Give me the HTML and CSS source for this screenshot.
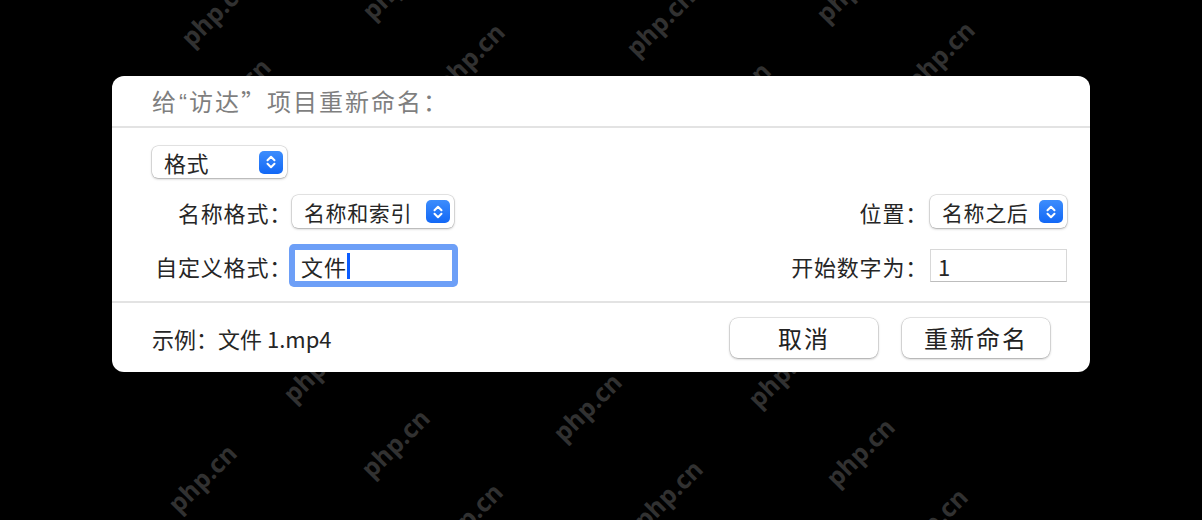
FILE: index.html
```html
<!DOCTYPE html>
<html lang="zh-CN">
<head>
<meta charset="utf-8">
<link rel="stylesheet" href="styles.css">
</head>
<body>
<div class="watermarks">
  <span class="wm" style="left:215px;top:12px">php.cn</span>
  <span class="wm" style="left:396px;top:-15px">php.cn</span>
  <span class="wm" style="left:660px;top:22px">php.cn</span>
  <span class="wm" style="left:850px;top:-12px">php.cn</span>
  <span class="wm" style="left:470px;top:57px">php.cn</span>
  <span class="wm" style="left:940px;top:55px">php.cn</span>
  <span class="wm" style="left:236px;top:92px">php.cn</span>
  <span class="wm" style="left:736px;top:96px">php.cn</span>
  <span class="wm" style="left:317px;top:368px">php.cn</span>
  <span class="wm" style="left:587px;top:407px">php.cn</span>
  <span class="wm" style="left:782px;top:373px">php.cn</span>
  <span class="wm" style="left:395px;top:443px">php.cn</span>
  <span class="wm" style="left:860px;top:452px">php.cn</span>
  <span class="wm" style="left:202px;top:478px">php.cn</span>
  <span class="wm" style="left:668px;top:494px">php.cn</span>
  <span class="wm" style="left:468px;top:517px">php.cn</span>
  <span class="wm" style="left:933px;top:522px">php.cn</span>
</div>

<div class="dialog">
  <div class="title">给<span class="q">“</span>访达”项目重新命名：</div>
  <div class="form">
    <div class="popup popup-format">
      <span class="popup-text">格式</span>
      <span class="stepper"><svg viewBox="0 0 24 24" width="24" height="24"><path d="M8.5 10.2 L12 6.7 L15.5 10.2 M8.5 13.8 L12 17.3 L15.5 13.8" fill="none" stroke="#fff" stroke-width="2" stroke-linecap="round" stroke-linejoin="round"/></svg></span>
    </div>
    <div class="grid">
      <div class="label">名称格式：</div>
      <div class="popup popup-wide">
        <span class="popup-text">名称和索引</span>
        <span class="stepper"><svg viewBox="0 0 24 24" width="24" height="24"><path d="M8.5 10.2 L12 6.7 L15.5 10.2 M8.5 13.8 L12 17.3 L15.5 13.8" fill="none" stroke="#fff" stroke-width="2" stroke-linecap="round" stroke-linejoin="round"/></svg></span>
      </div>
      <div class="spacer"></div>
      <div class="label label-right">位置：</div>
      <div class="popup popup-right">
        <span class="popup-text">名称之后</span>
        <span class="stepper"><svg viewBox="0 0 24 24" width="24" height="24"><path d="M8.5 10.2 L12 6.7 L15.5 10.2 M8.5 13.8 L12 17.3 L15.5 13.8" fill="none" stroke="#fff" stroke-width="2" stroke-linecap="round" stroke-linejoin="round"/></svg></span>
      </div>

      <div class="label">自定义格式：</div>
      <div class="textfield focused"><span>文件</span><span class="caret"></span></div>
      <div class="spacer"></div>
      <div class="label label-right">开始数字为：</div>
      <div class="textfield plain">1</div>
    </div>
  </div>
  <div class="footer">
    <div class="example">示例：文件 1.mp4</div>
    <div class="buttons">
      <button class="btn">取消</button>
      <button class="btn">重新命名</button>
    </div>
  </div>
</div>
</body>
</html>
```

FILE: styles.css
```css
html, body {
  margin: 0;
  padding: 0;
  overflow: hidden;
}
html {
  width: 1202px;
  height: 520px;
  background: #000;
}
body {
  width: 1202px;
  height: 520px;
  background: #000;
  position: relative;
  font-family: "Noto Sans CJK SC", "Noto Sans", sans-serif;
  color: #262626;
}
.watermarks {
  position: absolute;
  inset: 0;
  z-index: 0;
  overflow: hidden;
}
.wm {
  position: absolute;
  transform: translate(-50%, -50%) rotate(-45deg);
  font-family: "Open Sans", "Noto Sans", sans-serif;
  font-weight: 700;
  font-size: 25px;
  color: #313131;
  white-space: nowrap;
  line-height: 1;
}
.dialog {
  position: relative;
  z-index: 1;
  margin: 76px 0 0 112px;
  width: 978px;
  height: 296px;
  background: #fff;
  border-radius: 12px;
  display: flex;
  flex-direction: column;
}
.title {
  height: 50px;
  line-height: 50px;
  padding-left: 40px;
  font-size: 24px;
  letter-spacing: 2px;
  color: #7f7f7f;
  border-bottom: 2px solid #e3e3e3;
}
.q {
  font-family: "Liberation Sans", sans-serif;
  margin-left: 1px;
}
.form {
  padding: 18px 23px 17px 40px;
  border-bottom: 2px solid #e3e3e3;
  display: flex;
  flex-direction: column;
  gap: 17px;
}
.popup {
  height: 32px;
  background: #fff;
  border-radius: 6px;
  box-shadow: 0 0 0 0.5px rgba(0,0,0,0.18), 0 1px 2.5px rgba(0,0,0,0.28);
  display: flex;
  align-items: center;
  justify-content: space-between;
  padding: 0 4px 0 12px;
  box-sizing: border-box;
  font-size: 21px;
  letter-spacing: 0.6px;
}
.popup-format {
  width: 135px;
  font-size: 22px;
}
.popup-wide {
  width: 162px;
  height: 33px;
}
.popup-right {
  width: 137px;
  height: 33px;
}
.stepper {
  width: 24px;
  height: 23px;
  border-radius: 5px;
  background: linear-gradient(#3d8dfc, #1268f6);
  display: flex;
  align-items: center;
  justify-content: center;
}
.stepper svg {
  display: block;
}
.grid {
  display: grid;
  grid-template-columns: 140px 163px 1fr auto 137px;
  grid-template-rows: 33px 37px;
  row-gap: 19px;
  align-items: center;
}
.label {
  font-size: 22px;
  letter-spacing: 0.8px;
  text-align: right;
  white-space: nowrap;
}
.label-right {
  margin-right: 2px;
}
.textfield {
  box-sizing: border-box;
  background: #fff;
  font-size: 22px;
  display: flex;
  align-items: center;
}
.focused {
  width: 163px;
  height: 37px;
  border: 3px solid #6d9ff7;
  box-shadow: 0 0 0 3px #6d9ff7;
  border-radius: 2px;
  padding-left: 6px;
  letter-spacing: 1px;
}
.caret {
  display: inline-block;
  width: 3px;
  height: 26px;
  background: #0b5cff;
}
.plain {
  width: 137px;
  height: 33px;
  border: 1px solid #d8d8d8;
  border-bottom-color: #bdbdbd;
  padding-left: 7px;
}
.footer {
  flex: 1;
  display: flex;
  align-items: center;
  justify-content: space-between;
  padding: 0 40px;
}
.example {
  font-size: 22px;
}
.buttons {
  display: flex;
  gap: 24px;
}
.btn {
  width: 148px;
  height: 40px;
  border: none;
  background: #fff;
  border-radius: 8px;
  box-shadow: 0 0 0 0.5px rgba(0,0,0,0.18), 0 1px 2.5px rgba(0,0,0,0.3);
  font-family: "Noto Sans CJK SC", sans-serif;
  font-size: 24px;
  letter-spacing: 2px;
  color: #222;
  padding: 0;
}
```
